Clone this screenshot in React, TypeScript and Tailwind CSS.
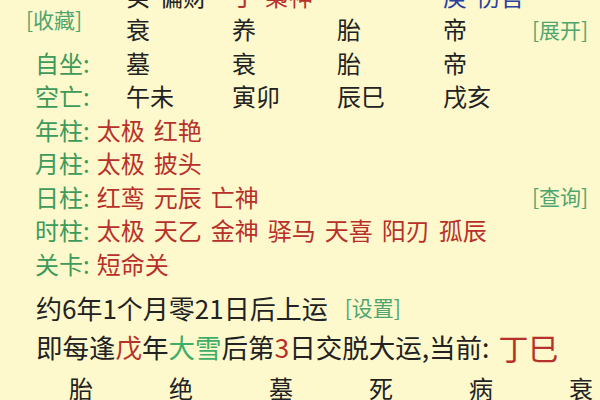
const FONT = { fontFamily: '"Noto Sans CJK SC", "Noto Sans", sans-serif' };

const green = "text-[#3d9a5a]";
const link = "text-[#4fa56f] text-[21px] leading-none";
const red = "text-[#b8302a]";

const pillars: { label: string; items: string[]; action?: string }[] = [
  { label: "年柱", items: ["太极", "红艳"] },
  { label: "月柱", items: ["太极", "披头"] },
  { label: "日柱", items: ["红鸾", "元辰", "亡神"], action: "[查询]" },
  { label: "时柱", items: ["太极", "天乙", "金神", "驿马", "天喜", "阳刃", "孤辰"] },
  { label: "关卡", items: ["短命关"] },
];

const cycle = ["胎", "绝", "墓", "死", "病", "衰"];

function Cell({ children, className = "" }: { children?: React.ReactNode; className?: string }) {
  return <div className={`flex h-[33.5px] items-center ${className}`}>{children}</div>;
}

export default function App() {
  return (
    <div
      className="h-[400px] w-[600px] overflow-hidden bg-[#fdf9cc] text-[24px] text-[#222222]"
      style={FONT}
    >
      {/* top table: stems / growth stages / void */}
      <div className="-mt-[21px] grid grid-cols-[126px_106px_105px_106px_89px_1fr]">
        <Cell />
        <Cell className="gap-[9px]">
          <span>癸</span>
          <span>偏财</span>
        </Cell>
        <Cell className={`gap-[9px] ${red}`}>
          <span>丁</span>
          <span>枭神</span>
        </Cell>
        <Cell />
        <Cell className="gap-[9px] text-[#2b3fa0]">
          <span>庚</span>
          <span>伤官</span>
        </Cell>
        <Cell />

        <Cell className="items-start pl-[26px]">
          <span className={`${link} -mt-[4px]`}>[收藏]</span>
        </Cell>
        <Cell>衰</Cell>
        <Cell>养</Cell>
        <Cell>胎</Cell>
        <Cell>帝</Cell>
        <Cell>
          <span className={link}>[展开]</span>
        </Cell>

        <Cell className={`pl-[35px] ${green}`}>自坐:</Cell>
        <Cell>墓</Cell>
        <Cell>衰</Cell>
        <Cell>胎</Cell>
        <Cell>帝</Cell>
        <Cell />

        <Cell className={`pl-[35px] ${green}`}>空亡:</Cell>
        <Cell>午未</Cell>
        <Cell>寅卯</Cell>
        <Cell>辰巳</Cell>
        <Cell>戌亥</Cell>
        <Cell />
      </div>

      {/* shensha per pillar */}
      {pillars.map((p) => (
        <div key={p.label} className="flex h-[33.5px] items-center pl-[35px]">
          <span className={`${green} mr-[7px]`}>{p.label}:</span>
          <div className={`flex gap-[9px] ${red}`}>
            {p.items.map((it, i) => (
              <span key={i}>{it}</span>
            ))}
          </div>
          {p.action && (
            <span className={`${link} ml-auto w-[68px]`}>{p.action}</span>
          )}
        </div>
      ))}

      {/* luck start */}
      <div className="mt-[5px] flex h-[44px] items-center pl-[36px] text-[26px]">
        <span>约6年1个月零21日后上运</span>
        <span className={`${link} ml-[17px] text-[20px]`}>[设置]</span>
      </div>
      <div className="flex h-[34px] items-center pl-[36px] text-[26.5px]">
        <span>即每逢</span>
        <span className={red}>戊</span>
        <span>年</span>
        <span className="text-[#3fae68]">大雪</span>
        <span>后第</span>
        <span className={red}>3</span>
        <span>日交脱大运,当前:</span>
        <span className={`${red} ml-[9px] text-[30px] leading-none`}>丁巳</span>
      </div>

      <div className="grid h-[48px] grid-cols-[repeat(6,100px)] items-center pl-[31px]">
        {cycle.map((c, i) => (
          <span key={i} className="text-center">
            {c}
          </span>
        ))}
      </div>
    </div>
  );
}
